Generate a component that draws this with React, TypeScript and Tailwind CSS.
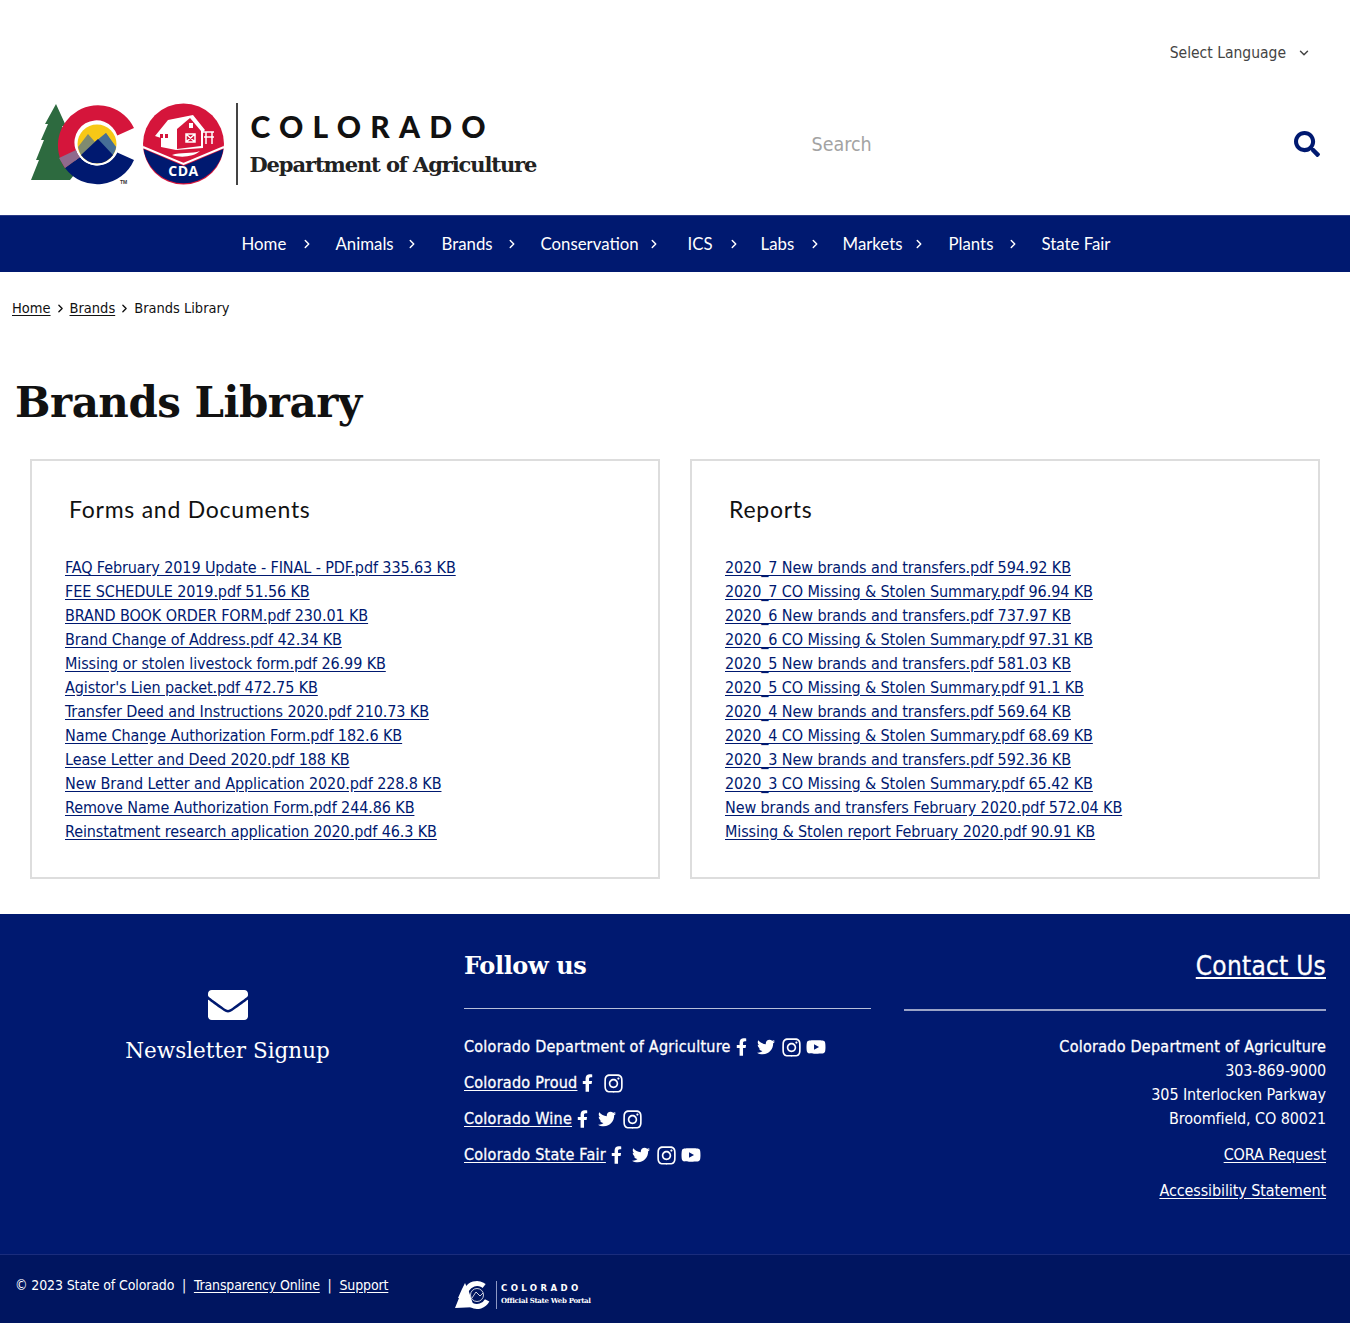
import { ChevronDown, ChevronRight } from 'lucide-react';
import { FaFacebookF, FaTwitter, FaInstagram, FaYoutube, FaEnvelope, FaSearch } from 'react-icons/fa';

const body = "font-['DejaVu_Sans_Condensed','DejaVu_Sans',sans-serif]";
const slab = "font-['DejaVu_Serif',serif]";
const strong = '[-webkit-text-stroke:0.3px_white] tracking-[0.25px]';

const navItems = [
  { label: 'Home', w: 'w-[94px]', pr: 'pr-[22px]' },
  { label: 'Animals', w: 'w-[106px]', pr: 'pr-[23px]' },
  { label: 'Brands', w: 'w-[99px]', pr: 'pr-[22px]' },
  { label: 'Conservation', w: 'w-[147px]', pr: 'pr-[27px]' },
  { label: 'ICS', w: 'w-[73px]', pr: 'pr-[20px]' },
  { label: 'Labs', w: 'w-[82px]', pr: 'pr-[21px]' },
  { label: 'Markets', w: 'w-[106px]', pr: 'pr-[23px]' },
  { label: 'Plants', w: 'w-[93px]', pr: 'pr-[22px]' },
  { label: 'State Fair', w: '', pr: '' },
];

const forms = [
  'FAQ February 2019 Update - FINAL - PDF.pdf 335.63 KB',
  'FEE SCHEDULE 2019.pdf 51.56 KB',
  'BRAND BOOK ORDER FORM.pdf 230.01 KB',
  'Brand Change of Address.pdf 42.34 KB',
  'Missing or stolen livestock form.pdf 26.99 KB',
  "Agistor's Lien packet.pdf 472.75 KB",
  'Transfer Deed and Instructions 2020.pdf 210.73 KB',
  'Name Change Authorization Form.pdf 182.6 KB',
  'Lease Letter and Deed 2020.pdf 188 KB',
  'New Brand Letter and Application 2020.pdf 228.8 KB',
  'Remove Name Authorization Form.pdf 244.86 KB',
  'Reinstatment research application 2020.pdf 46.3 KB',
];

const reports = [
  '2020_7 New brands and transfers.pdf 594.92 KB',
  '2020_7 CO Missing & Stolen Summary.pdf 96.94 KB',
  '2020_6 New brands and transfers.pdf 737.97 KB',
  '2020_6 CO Missing & Stolen Summary.pdf 97.31 KB',
  '2020_5 New brands and transfers.pdf 581.03 KB',
  '2020_5 CO Missing & Stolen Summary.pdf 91.1 KB',
  '2020_4 New brands and transfers.pdf 569.64 KB',
  '2020_4 CO Missing & Stolen Summary.pdf 68.69 KB',
  '2020_3 New brands and transfers.pdf 592.36 KB',
  '2020_3 CO Missing & Stolen Summary.pdf 65.42 KB',
  'New brands and transfers February 2020.pdf 572.04 KB',
  'Missing & Stolen report February 2020.pdf 90.91 KB',
];

function Logo() {
  return (
    <svg width="196" height="83" viewBox="30 103 196 83" className="shrink-0">
      <path d="M56 104 L66 126 L62 126 L72 146 L68 146 L78 170 L70 180 L31 180 L39 160 L36 160 L44 140 L41 140 L48 124 L45 124 Z" fill="#2d6a3f" />
      <path d="M134 128 A40 40 0 1 0 65 168 L80 157 A22 22 0 1 1 117.300 135.400 Z" fill="#d5153b" />
      <path d="M65 168 A40 40 0 0 0 134 160 L117.300 152.600 A22 22 0 0 1 80 157 Z" fill="#001970" />
      <path d="M59 158 L65 168 L80 157 A22 22 0 0 1 76 150 Z" fill="#8f6a8d" />
      <circle cx="97" cy="144" r="21.500" fill="#fff" />
      <circle cx="97" cy="144" r="19.500" fill="#f7c816" />
      <path d="M78 147 L88 134 L95 142 L106 133 L116 147 A19.500 19.500 0 0 1 80 153 Z" fill="#7f8b70" />
      <path d="M95 142 L106 133 L116 147 A19.500 19.500 0 0 1 110 158 Z" fill="#466f96" />
      <path d="M81 155 L98 139 L113 155 A19.500 19.500 0 0 1 81 155 Z" fill="#001970" />
      <text x="120" y="184" fontSize="5" fontWeight="700" fill="#333" fontFamily="'Liberation Sans',sans-serif">TM</text>
      <circle cx="183.500" cy="144" r="40.500" fill="#d5153b" />
      <path d="M143.500 149 L183.500 166 L223.500 149 A40.500 40.500 0 0 1 143.500 149 Z" fill="#001970" />
      <path d="M143 147 L183.500 164 L224 147" stroke="#fff" strokeWidth="2" fill="none" />
      <path d="M155 136 L168 120 L193 115 L205 130 L203 132 L203 148 L176 150 L161 147 L161 138 Z" fill="#fff" />
      <path d="M177 129 L190 118 L201 131 L201 146 L177 149 Z" fill="#d5153b" />
      <path d="M186 134 h9 v8 h-9 Z M186 134 l9 8 M195 134 l-9 8" stroke="#fff" strokeWidth="1.500" fill="none" />
      <rect x="189" y="123" width="4" height="5" fill="#fff" />
      <rect x="160" y="134" width="3" height="4" fill="#d5153b" />
      <rect x="165" y="134" width="3" height="4" fill="#d5153b" />
      <path d="M203 132 H214 M206 132 V144 M212 132 V144 M204 137 H214" stroke="#fff" strokeWidth="1.500" fill="none" />
      <path d="M172 155 C180 152 192 154 200 151 C194 157 180 158 172 155 Z" fill="#fff" />
      <text x="183.500" y="176" textAnchor="middle" fontSize="14" fontWeight="700" fill="#fff" letterSpacing="0.500" fontFamily="'Open Sans',sans-serif">CDA</text>
    </svg>
  );
}

function PortalLogo() {
  return (
    <svg width="37" height="30" viewBox="0 0 37 30" className="shrink-0">
      <path d="M10 3 L14 12 L18 24 L22 27 L0 28 L4 18 L3 18 L7 9 Z" fill="#fff" />
      <circle cx="22" cy="15" r="11.500" fill="none" stroke="#fff" strokeWidth="5" strokeDasharray="56 16" transform="rotate(28 22 15)" />
      <circle cx="22" cy="15" r="6.500" fill="none" stroke="#fff" strokeWidth="0.800" />
      <path d="M17 18 L21 12 L25 16 L28 13" stroke="#fff" strokeWidth="0.800" fill="none" />
    </svg>
  );
}

function Social({ icons }: { icons: string }) {
  return (
    <span className="inline-flex items-center text-white ml-[5px]">
      {icons.includes('f') && <span className="w-[21px]"><FaFacebookF className="text-[18px] w-[11px]" /></span>}
      {icons.includes('t') && <span className="w-[24px]"><FaTwitter className="text-[18px]" /></span>}
      {icons.includes('i') && <span className="w-[25px]"><FaInstagram className="text-[21px]" /></span>}
      {icons.includes('y') && <FaYoutube className="text-[20px]" />}
    </span>
  );
}

function LinkCard({ title, links }: { title: string; links: string[] }) {
  return (
    <section className="border-2 border-[#dddddd] h-[420px] pt-[33px] pl-[33px]">
      <h2 className="text-[23px] leading-[30px] tracking-[0.75px] text-[#111] pl-[4px] mb-[32px] font-['Lato',sans-serif]">{title}</h2>
      <ul className="text-[16px] leading-[24px] tracking-[-0.1px] text-[#001970]">
        {links.map((l) => (
          <li key={l}>
            <a href="#" className="underline underline-offset-2">{l}</a>
          </li>
        ))}
      </ul>
    </section>
  );
}

export default function App() {
  return (
    <div className={`${body} bg-white text-[#111] h-[1323px] flex flex-col`}>
      <header className="h-[215px] shrink-0 px-[30px]">
        <div className="h-[103px] flex items-start justify-end pt-[42px] pr-[9px] text-[15.5px] leading-[22px] text-[#444]">
          <span>Select Language</span>
          <ChevronDown className="w-[14px] h-[14px] ml-[11px] mt-[4px]" strokeWidth={2.5} />
        </div>
        <div className="flex items-start">
          <Logo />
          <div className="w-[1.5px] h-[82px] bg-[#444] ml-[10px] shrink-0" />
          <div className="ml-[12px] w-[300px] pt-[4px]">
            <div className="text-[30px] leading-[38px] font-black tracking-[9.2px] pl-[1px] whitespace-nowrap font-['Lato',sans-serif] text-[#111]">COLORADO</div>
            <div className={`${slab} text-[21px] leading-[39px] font-bold whitespace-nowrap tracking-[-1.1px] text-[#222]`}>Department of Agriculture</div>
          </div>
          <div className="ml-[-24px] flex-1 flex items-center justify-between h-[82px]">
            <span className="text-[19.5px] text-[#a3a3a3] ml-[286px] pt-[2px]">Search</span>
            <FaSearch className="text-[26px] text-[#001970]" />
          </div>
        </div>
      </header>

      <nav className="h-[57px] shrink-0 bg-[#001970] border-t border-[#2a3a85] pl-[2px] pb-[1px] flex items-center justify-center text-white font-['Lato',sans-serif] text-[16.8px]">
        {navItems.map((n, i) => (
          <div key={n.label} className={`${n.w} ${n.pr} flex items-center justify-between`}>
            <span>{n.label}</span>
            {i < navItems.length - 1 && <ChevronRight className="w-[14px] h-[14px]" strokeWidth={2.5} />}
          </div>
        ))}
      </nav>

      <main className="flex-1">
        <div className="px-[12px] pt-[24px] h-[60px] text-[14.5px] leading-[24px] flex items-start gap-[3px]">
          <a href="#" className="underline underline-offset-2">Home</a>
          <ChevronRight className="w-[13px] h-[13px] mt-[6px]" strokeWidth={2.5} />
          <a href="#" className="underline underline-offset-2">Brands</a>
          <ChevronRight className="w-[13px] h-[13px] mt-[6px]" strokeWidth={2.5} />
          <span>Brands Library</span>
        </div>
        <h1 className={`${slab} font-bold text-[42px] leading-[60px] tracking-[-0.5px] pl-[15px] mt-[41px] text-[#111]`}>Brands Library</h1>
        <div className="grid grid-cols-2 gap-[30px] px-[30px] mt-[26px]">
          <LinkCard title="Forms and Documents" links={forms} />
          <LinkCard title="Reports" links={reports} />
        </div>
      </main>

      <footer className="h-[340px] shrink-0 bg-[#001970] text-white flex text-[16px] leading-[24px] tracking-[-0.1px]">
        <div className="w-[455px] shrink-0 flex flex-col items-center pt-[71px]">
          <FaEnvelope className="text-[40px]" />
          <a href="#" className={`${slab} text-[21.5px] mt-[6px] leading-[40px] tracking-normal`}>Newsletter Signup</a>
        </div>
        <div className="ml-[9px] w-[407px] shrink-0 pt-[33px]">
          <h3 className={`${slab} font-bold text-[24px] leading-[38px] tracking-[-0.4px]`}>Follow us</h3>
          <div className="border-b border-[#b8bfd9] h-[24px] mb-[26px]" />
          <div className={`flex flex-col gap-[12px] ${strong}`}>
            <div className="flex items-center h-[24px]">Colorado Department of Agriculture <Social icons="ftiy" /></div>
            <div className="flex items-center h-[24px]"><a href="#" className="underline underline-offset-2">Colorado Proud</a> <Social icons="fi" /></div>
            <div className="flex items-center h-[24px]"><a href="#" className="underline underline-offset-2">Colorado Wine</a> <Social icons="fti" /></div>
            <div className="flex items-center h-[24px]"><a href="#" className="underline underline-offset-2">Colorado State Fair</a> <Social icons="ftiy" /></div>
          </div>
        </div>
        <div className="ml-[33px] w-[422px] shrink-0 pt-[33px] text-right">
          <a href="#" className={`underline underline-offset-2 text-[26px] leading-[38px] ${strong}`}>Contact Us</a>
          <div className="border-b-2 border-[#9aa3c7] h-[26px] mb-[24px]" />
          <div className={strong}>Colorado Department of Agriculture</div>
          <div>303-869-9000</div>
          <div>305 Interlocken Parkway</div>
          <div>Broomfield, CO 80021</div>
          <div className="mt-[12px]"><a href="#" className="underline underline-offset-2">CORA Request</a></div>
          <div className="mt-[12px]"><a href="#" className="underline underline-offset-2">Accessibility Statement</a></div>
        </div>
      </footer>

      <div className="h-[69px] shrink-0 bg-[#001560] border-t border-[#1a2c7c] text-white flex items-start text-[14px] tracking-[-0.13px] pl-[15px]">
        <div className="pt-[20px] leading-[20px] w-[440px] whitespace-nowrap">
          © 2023 State of Colorado &nbsp;|&nbsp; <a href="#" className="underline underline-offset-2">Transparency Online</a> &nbsp;|&nbsp; <a href="#" className="underline underline-offset-2">Support</a>
        </div>
        <div className="flex items-center mt-[25px] gap-[2px]">
          <PortalLogo />
          <div className="border-l border-[#8d97c4] pl-[4px] h-[28px] ml-[2px]">
            <div className="text-[9.5px] leading-[13px] font-bold tracking-[3.4px]">COLORADO</div>
            <div className="text-[7px] leading-[14px] font-bold whitespace-nowrap font-['DejaVu_Serif',serif] tracking-[-0.3px]">Official State Web Portal</div>
          </div>
        </div>
      </div>
    </div>
  );
}
